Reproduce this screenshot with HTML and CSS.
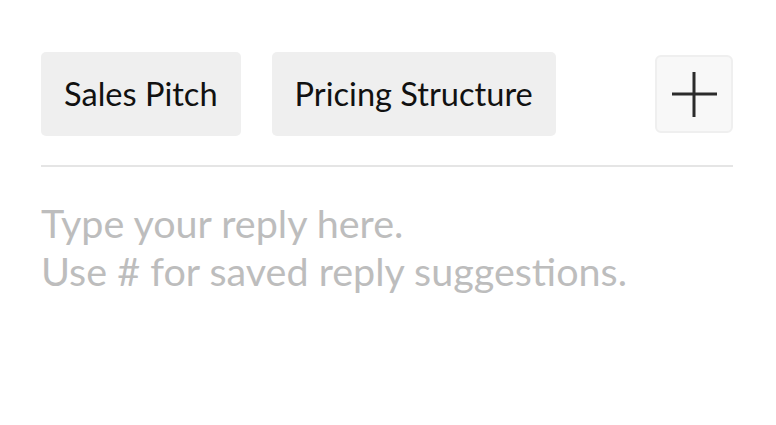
FILE: index.html
```html
<!DOCTYPE html>
<html>
<head>
<meta charset="utf-8">
<link rel="stylesheet" href="styles.css">
</head>
<body>
<div class="composer">
  <div class="toolbar">
    <div class="chips">
      <button class="chip">Sales Pitch</button>
      <button class="chip">Pricing Structure</button>
    </div>
    <button class="add" aria-label="Add">
      <svg width="46" height="46" viewBox="0 0 46 46"><path d="M23 1V46M1 23H46" stroke="#2b2b2b" stroke-width="3" fill="none"/></svg>
    </button>
  </div>
  <div class="divider"></div>
  <textarea class="reply" placeholder="Type your reply here.&#10;Use # for saved reply suggestions."></textarea>
</div>
</body>
</html>
```
FILE: styles.css
```css
html, body {
  margin: 0;
  background: #fff;
  font-family: Lato, "Noto Sans", sans-serif;
}
.composer {
  padding: 52px 43px 0 41px;
}
.toolbar {
  display: flex;
  align-items: center;
}
.chips {
  display: flex;
  gap: 31px;
}
.chip {
  font-family: Lato, sans-serif;
  font-size: 32.6px;
  color: #111;
  background: #efefef;
  border: none;
  border-radius: 5px;
  height: 84px;
  padding: 0 23px;
  line-height: 1;
}
.add {
  margin-left: auto;
  width: 78px;
  height: 78px;
  background: #f8f8f8;
  border: 2px solid #efefef;
  border-radius: 6px;
  display: flex;
  align-items: center;
  justify-content: center;
  padding: 0;
}
.divider {
  height: 2px;
  background: #e5e5e5;
  margin-top: 29px;
}
.reply {
  display: block;
  width: 100%;
  box-sizing: border-box;
  margin-top: 32px;
  border: none;
  outline: none;
  resize: none;
  padding: 0;
  font-family: Lato, sans-serif;
  font-size: 39.5px;
  line-height: 47.5px;
  height: 180px;
  background: transparent;
  color: #222;
}
.reply::placeholder {
  color: #bdbdbd;
}
```
